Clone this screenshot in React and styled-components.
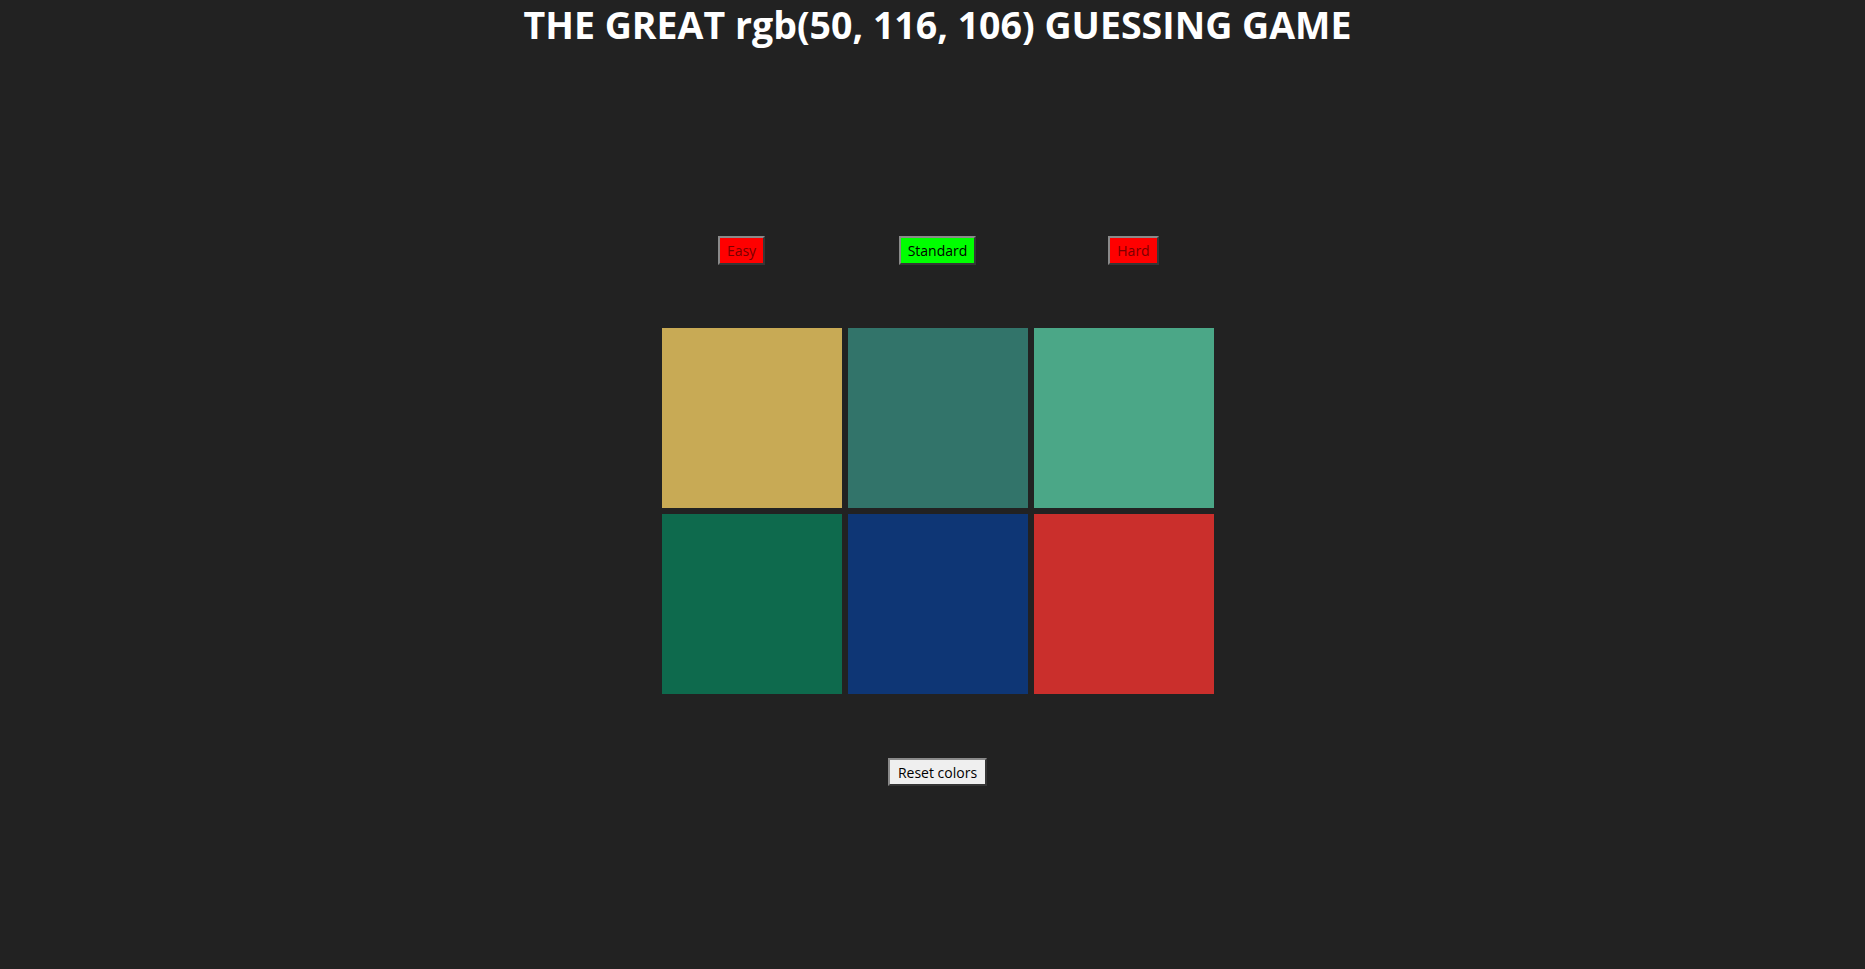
import React, {useState} from 'react';
import styled, {createGlobalStyle} from 'styled-components';

const GlobalStyle = createGlobalStyle`
  html, body {
    margin: 0;
    padding: 0;
    background: #222222;
    font-family: "Open Sans", "Noto Sans", sans-serif;
  }
`;

const colors = [
  'rgb(200, 170, 85)',
  'rgb(50, 116, 106)',
  'rgb(75, 167, 135)',
  'rgb(14, 106, 77)',
  'rgb(14, 54, 117)',
  'rgb(202, 47, 44)',
];

const modes = ['Easy', 'Standard', 'Hard'];

function App() {
  const [mode, setMode] = useState('Standard');

  return (
    <Page>
      <GlobalStyle />
      <Title>THE GREAT rgb(50, 116, 106) GUESSING GAME</Title>

      <ModeRow>
        {modes.map(name => (
          <ModeCell key={name}>
            <ModeButton type="button" $active={mode === name} onClick={() => setMode(name)}>
              {name}
            </ModeButton>
          </ModeCell>
        ))}
      </ModeRow>

      <Board>
        {colors.map((c, i) => <Square key={i} $color={c} />)}
      </Board>

      <ResetButton type="button">Reset colors</ResetButton>
    </Page>
  );
}

const Page = styled.div`
  display: flex;
  flex-direction: column;
  align-items: center;
  min-height: 969px;
  padding-left: 10px;
  box-sizing: border-box;
`;

const Title = styled.h1`
  margin: 0;
  color: #ffffff;
  font-size: 37.5px;
  font-weight: 700;
  line-height: 50px;
`;

const ModeRow = styled.div`
  display: grid;
  grid-template-columns: repeat(3, 196px);
  margin-top: 186px;
`;

const ModeCell = styled.div`
  display: flex;
  justify-content: center;
`;

const ModeButton = styled.button`
  height: 29px;
  padding: 0 7px;
  font-family: "Open Sans", "Noto Sans", sans-serif;
  font-size: 14px;
  background: ${p => (p.$active ? '#00ff00' : '#ff0000')};
  color: ${p => (p.$active ? '#000000' : '#7a0000')};
  border: 2px outset #8a8a8a;
  cursor: pointer;
`;

const Board = styled.div`
  display: grid;
  grid-template-columns: repeat(3, 180px);
  grid-auto-rows: 180px;
  gap: 6px;
  margin-top: 63px;
`;

const Square = styled.div`
  background: ${p => p.$color};
`;

const ResetButton = styled.button`
  margin-top: 64px;
  height: 28px;
  padding: 0 8px;
  font-family: "Open Sans", "Noto Sans", sans-serif;
  font-size: 14px;
  color: #000000;
  background: #efefef;
  border: 2px outset #8a8a8a;
  cursor: pointer;
`;

export default App;
